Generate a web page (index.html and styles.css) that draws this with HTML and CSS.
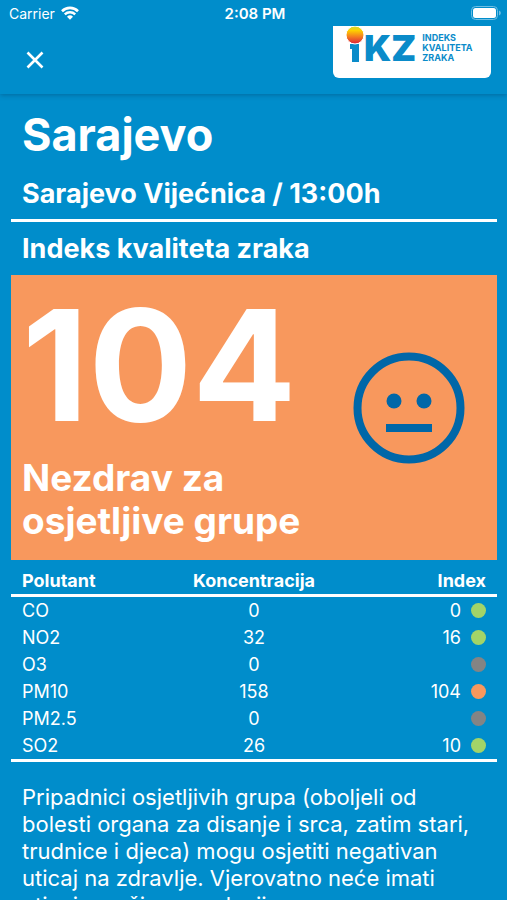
FILE: index.html
```
<!DOCTYPE html>
<html lang="bs">
<head>
  <meta charset="UTF-8" />
  <meta name="viewport" content="width=device-width, initial-scale=1.0"/>
  <title>Indeks kvaliteta zraka</title>
  <link rel="stylesheet" href="styles.css">
</head>
<body>
  <header class="top">
    <div class="status">
      <div class="carrier">
        <span>Carrier</span>
        <svg class="wifi" viewBox="0 0 18 14" aria-hidden="true">
          <path d="M1 5.2a11.4 11.4 0 0 1 16 0" fill="none" stroke="#fff" stroke-width="2.6"/>
          <path d="M3.8 8.4a7.4 7.4 0 0 1 10.4 0" fill="none" stroke="#fff" stroke-width="2.4"/>
          <path d="M9 13.8l-3-3a4.3 4.3 0 0 1 6 0z" fill="#fff"/>
        </svg>
      </div>
      <span class="clock">2:08 PM</span>
      <svg class="battery" viewBox="0 0 30 14" aria-hidden="true">
        <rect x="0.5" y="0.5" width="26" height="13" rx="4" fill="none" stroke="#6fbee3"/>
        <rect x="2" y="2" width="23" height="10" rx="2.5" fill="#fff"/>
        <path d="M28 4.5c2.4 1 2.4 4 0 5z" fill="#6fbee3"/>
      </svg>
    </div>

    <div class="bar">
      <button class="close" aria-label="Zatvori">
        <svg viewBox="0 0 18 18"><path d="M1.5 1.5l15 15M16.5 1.5l-15 15" stroke="#fff" stroke-width="2.6"/></svg>
      </button>
      <div class="logo">
        <div class="brand">
          <svg class="brand-i" viewBox="0 0 18 36" aria-hidden="true">
            <defs>
              <linearGradient id="sun" x1="0" y1="0" x2="0" y2="1">
                <stop offset="0" stop-color="#c9d93a"/>
                <stop offset="0.25" stop-color="#fdd000"/>
                <stop offset="0.6" stop-color="#f47b20"/>
                <stop offset="1" stop-color="#d91f3c"/>
              </linearGradient>
            </defs>
            <path d="M4 18h9v18H6V23H4z" fill="#0a8bc9"/>
            <circle cx="9" cy="9" r="9" fill="url(#sun)" stroke="#fff" stroke-width="1"/>
          </svg>
          <span class="brand-name">KZ</span>
        </div>
        <div class="brand-text">INDEKS<br>KVALITETA<br>ZRAKA</div>
      </div>
    </div>
  </header>

  <main>
    <h1>Sarajevo</h1>
    <h2 class="station">Sarajevo Vijećnica / 13:00h</h2>
    <h2 class="subtitle">Indeks kvaliteta zraka</h2>

    <section class="card">
      <div class="result">
        <div class="value">104</div>
        <div class="label">Nezdrav za osjetljive grupe</div>
      </div>
      <svg class="face" viewBox="0 0 112 112" aria-hidden="true">
        <circle cx="56" cy="56" r="51.5" fill="none" stroke="#0067a8" stroke-width="8"/>
        <circle cx="41" cy="49" r="7.5" fill="#0067a8"/>
        <circle cx="71" cy="49" r="7.5" fill="#0067a8"/>
        <rect x="33" y="72" width="46" height="8" fill="#0067a8"/>
      </svg>
    </section>

    <table>
      <thead>
        <tr><th>Polutant</th><th>Koncentracija</th><th>Index</th></tr>
      </thead>
      <tbody>
        <tr><td>CO</td><td>0</td><td><div class="index">0<i class="dot good"></i></div></td></tr>
        <tr><td>NO2</td><td>32</td><td><div class="index">16<i class="dot good"></i></div></td></tr>
        <tr><td>O3</td><td>0</td><td><div class="index"><i class="dot"></i></div></td></tr>
        <tr><td>PM10</td><td>158</td><td><div class="index">104<i class="dot sensitive"></i></div></td></tr>
        <tr><td>PM2.5</td><td>0</td><td><div class="index"><i class="dot"></i></div></td></tr>
        <tr><td>SO2</td><td>26</td><td><div class="index">10<i class="dot good"></i></div></td></tr>
      </tbody>
    </table>

    <p class="advice">Pripadnici osjetljivih grupa (oboljeli od bolesti organa za disanje i srca, zatim stari, trudnice i djeca) mogu osjetiti negativan uticaj na zdravlje. Vjerovatno neće imati uticaja na širu populaciju.</p>
  </main>
</body>
</html>
```
FILE: styles.css
```
* {
  box-sizing: border-box;
}

body {
  margin: 0;
  height: 100vh;
  overflow: hidden;
  background-color: #008dcb;
  color: #fff;
  font-family: Inter, sans-serif;
}

.top {
  height: 94px;
  box-shadow: 0 1px 5px rgba(0, 50, 90, 0.4);
}

.status {
  display: grid;
  grid-template-columns: 1fr auto 1fr;
  align-items: center;
  height: 26px;
  padding: 0 6px 0 9px;
  font-size: 14px;
}

.carrier {
  display: flex;
  align-items: center;
  gap: 6px;
}

.wifi {
  width: 18px;
  height: 14px;
}

.clock {
  font-size: 15px;
  font-weight: 600;
}

.battery {
  width: 30px;
  height: 14px;
  justify-self: end;
}

.bar {
  display: flex;
  justify-content: space-between;
  align-items: flex-start;
  padding: 0 16px 0 22px;
}

.close {
  display: flex;
  margin-top: 21px;
  padding: 4px;
  border: none;
  background: none;
  cursor: pointer;
}

.close svg {
  width: 18px;
  height: 18px;
}

.logo {
  display: flex;
  gap: 6px;
  width: 158px;
  height: 52px;
  padding-left: 13px;
  border-radius: 0 0 6px 6px;
  background-color: #fff;
  color: #0a8bc9;
}

.brand {
  display: flex;
  align-items: flex-start;
}

.brand-i {
  width: 18px;
  height: 36px;
}

.brand-name {
  margin-top: 3px;
  font-size: 36px;
  font-weight: 900;
  line-height: 38px;
}

.brand-text {
  padding-top: 7px;
  font-size: 9px;
  font-weight: 700;
  line-height: 10px;
}

main {
  padding: 0 10px 0 11px;
}

h1,
h2 {
  margin: 0;
  padding: 0 11px;
}

h1 {
  padding-top: 15px;
  font-size: 45px;
  line-height: 52px;
}

h2 {
  font-size: 27px;
  line-height: 32px;
}

.station {
  padding-top: 17px;
  padding-bottom: 9px;
  border-bottom: 3px solid #fff;
}

.subtitle {
  padding-top: 11px;
  padding-bottom: 10px;
}

.card {
  display: flex;
  align-items: center;
  justify-content: space-between;
  padding: 16px 32px 18px 11px;
  background-color: #f8985d;
}

.result {
  max-width: 300px;
}

.value {
  font-size: 154px;
  font-weight: 700;
  line-height: 148px;
}

.label {
  padding-top: 17px;
  font-size: 37px;
  font-weight: 700;
  line-height: 43px;
}

.face {
  width: 112px;
  height: 112px;
  margin-bottom: 18px;
}

table {
  width: 100%;
  margin-top: 7px;
  border-collapse: collapse;
  table-layout: fixed;
  border-bottom: 3px solid #fff;
  font-size: 18px;
}

th,
td {
  padding: 0 11px;
  text-align: center;
  line-height: 27px;
}

th {
  border-bottom: 3px solid #fff;
}

th:first-child,
td:first-child {
  text-align: left;
}

th:last-child {
  text-align: right;
}

.index {
  display: flex;
  align-items: center;
  justify-content: flex-end;
  gap: 10px;
}

.dot {
  width: 15px;
  height: 15px;
  border-radius: 50%;
  background-color: #848484;
}

.dot.good {
  background-color: #a3d468;
}

.dot.sensitive {
  background-color: #f8985d;
}

.advice {
  margin: 0;
  padding: 22px 11px 0;
  font-size: 22px;
  line-height: 27px;
}
```
